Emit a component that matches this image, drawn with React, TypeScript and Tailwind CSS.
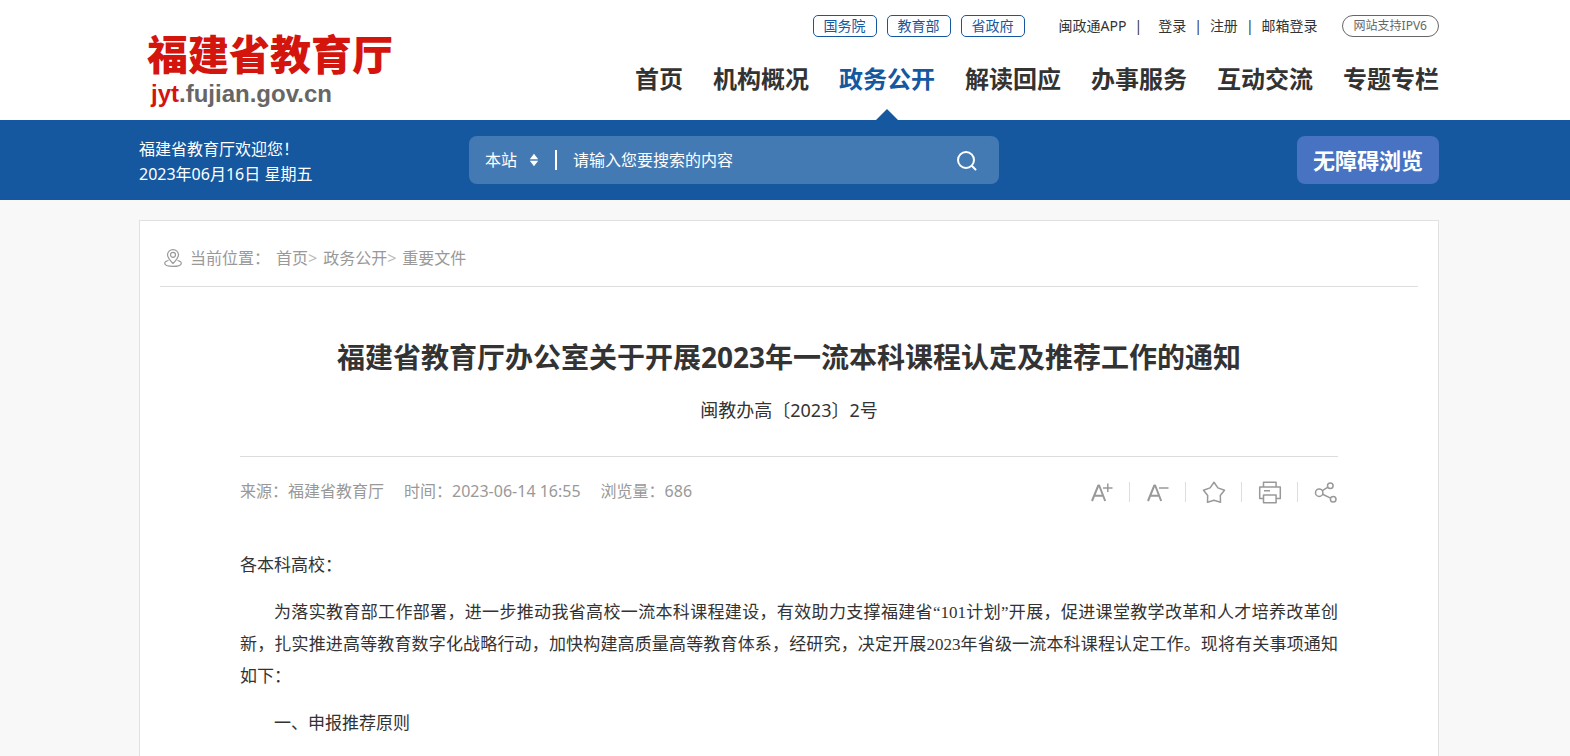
import type { ReactNode } from 'react';

const departments = ['国务院', '教育部', '省政府'];

const navItems = [
    { label: '首页' },
    { label: '机构概况' },
    { label: '政务公开', active: true },
    { label: '解读回应' },
    { label: '办事服务' },
    { label: '互动交流' },
    { label: '专题专栏' },
];

const crumbs = ['首页', '政务公开', '重要文件'];

const paragraphs = [
    '为落实教育部工作部署，进一步推动我省高校一流本科课程建设，有效助力支撑福建省“101计划”开展，促进课堂教学改革和人才培养改革创新，扎实推进高等教育数字化战略行动，加快构建高质量高等教育体系，经研究，决定开展2023年省级一流本科课程认定工作。现将有关事项通知如下：',
    '一、申报推荐原则',
];

const tools: { label: string; icon: ReactNode }[] = [
    {
        label: '放大字体',
        icon: (
            <>
                <path strokeWidth="2" d="M2 21 8.300 5.500h.900L15.200 21M4.500 15.700h8.300" />
                <path d="M13 8h9.500M17.800 3.500v8.500" />
            </>
        ),
    },
    {
        label: '缩小字体',
        icon: (
            <>
                <path strokeWidth="2" d="M2 21 8.300 5.500h.900L15.200 21M4.500 15.700h8.300" />
                <path d="M13 8h9.500" />
            </>
        ),
    },
    {
        label: '收藏',
        icon: <path d="m12 2.300 3.900 5.600 6.600 2.300-4.200 5.300.200 6.700-6.500-1.900-6.500 1.900.200-6.700-4.200-5.300 6.600-2.300Z" />,
    },
    {
        label: '打印',
        icon: <path d="M5.500 7V2.300h12.600V7M5.500 18.500H1.700V7h20.600v11.500h-4.200M5.500 15h12.600v7.700H5.500ZM6 10.700h6" />,
    },
    {
        label: '分享',
        icon: (
            <>
                <circle cx="5.200" cy="12.700" r="3.700" />
                <circle cx="16.300" cy="5.700" r="2.800" />
                <circle cx="19.200" cy="19.300" r="2.800" />
                <path d="m8.400 10.700 5.500-3.500M8.600 14.300l8 3.800" />
            </>
        ),
    },
];

function Header() {
    return (
        <header className="bg-white pl-2">
            <div className="mx-auto flex h-[120px] max-w-[1300px] justify-between">
                <a href="#" className="block pl-2 pt-7">
                    <span className="block text-[41px] leading-[52px] font-black text-[#d3150d]">福建省教育厅</span>
                    <span className="block pl-1 font-['Liberation_Sans'] text-2xl leading-7 font-bold text-[#666666]">
                        <span className="text-[#d3150d]">jyt</span>.fujian.gov.cn
                    </span>
                </a>

                <div className="flex flex-col items-end pt-[15px]">
                    <div className="flex items-center text-sm leading-5 text-[#333333]">
                        <div className="flex gap-[10px]">
                            {departments.map((name) => (
                                <a
                                    key={name}
                                    href="#"
                                    className="flex h-[22px] w-16 items-center justify-center rounded-[5px] border border-[#1558a0] text-[#1558a0]"
                                >
                                    {name}
                                </a>
                            ))}
                        </div>
                        <a href="#" className="ml-[34px]">闽政通APP</a>
                        <span className="mx-2">|</span>
                        <a href="#" className="ml-2">登录</a>
                        <span className="mx-2">|</span>
                        <a href="#">注册</a>
                        <span className="mx-2">|</span>
                        <a href="#">邮箱登录</a>
                        <a
                            href="#"
                            className="ml-6 flex h-[22px] items-center rounded-full border border-[#666666] px-[11px] text-xs text-[#666666]"
                        >
                            网站支持IPV6
                        </a>
                    </div>

                    <nav className="mt-6 flex grow gap-[30px] text-2xl leading-9 font-bold text-[#333333]">
                        {navItems.map((item) => (
                            <a
                                key={item.label}
                                href="#"
                                className={`flex flex-col items-center justify-between ${item.active ? 'text-[#1558a0]' : ''}`}
                            >
                                {item.label}
                                {item.active && (
                                    <svg viewBox="0 0 22 11" className="h-[11px] w-[22px]" fill="currentColor" aria-hidden="true">
                                        <path d="M11 0 22 11H0Z" />
                                    </svg>
                                )}
                            </a>
                        ))}
                    </nav>
                </div>
            </div>
        </header>
    );
}

function SearchBar() {
    return (
        <section className="bg-[#1558a0] pl-2 text-white">
            <div className="mx-auto flex h-20 max-w-[1300px] items-center">
                <div className="w-[330px] pt-1 text-base leading-[25px]">
                    <p>福建省教育厅欢迎您！</p>
                    <p>2023年06月16日 星期五</p>
                </div>

                <form className="flex h-12 w-[530px] items-center rounded-lg bg-[#447ab4] pl-4">
                    <select aria-label="搜索范围" className="w-9 appearance-none bg-transparent text-base outline-none">
                        <option>本站</option>
                    </select>
                    <svg viewBox="0 0 10 14" className="ml-2 h-[14px] w-[10px]" fill="currentColor" aria-hidden="true">
                        <path d="M5 .800 9.200 6.200H.800ZM5 13.200.800 7.800h8.400Z" />
                    </svg>
                    <span className="ml-4 h-5 w-[2px] bg-white" />
                    <input
                        type="text"
                        aria-label="搜索内容"
                        placeholder="请输入您要搜索的内容"
                        className="ml-4 grow bg-transparent text-base outline-none placeholder:text-white"
                    />
                    <button type="submit" aria-label="搜索" className="px-5">
                        <svg viewBox="0 0 24 24" className="size-6" fill="none" stroke="currentColor" strokeWidth="2" strokeLinecap="round">
                            <circle cx="11" cy="12" r="8" />
                            <path d="m17 18 3.500 3.500" />
                        </svg>
                    </button>
                </form>

                <button type="button" className="ml-auto h-12 w-[142px] rounded-lg bg-[#4773c2] text-[22px] font-bold">
                    无障碍浏览
                </button>
            </div>
        </section>
    );
}

function Breadcrumb() {
    return (
        <div className="flex h-[66px] items-center border-b border-[#dddddd] pt-2 text-base text-[#999999]">
            <svg viewBox="0 0 18 18" className="ml-1 size-[18px]" fill="none" stroke="currentColor" strokeWidth="1.200" aria-hidden="true">
                <path d="M9 14.500C6 11.500 3.500 8.500 3.500 5.800a5.500 5.200 0 0 1 11 0C14.500 8.500 12 11.500 9 14.500Z" />
                <circle cx="9" cy="5.800" r="2.500" />
                <path d="M4.500 11.500C2 12 .700 13 .700 14.300.700 16.200 4 17.400 9 17.400s8.300-1.200 8.300-3.100c0-1.300-1.300-2.300-3.800-2.800" />
            </svg>
            <span className="mr-[6px] ml-2">当前位置：</span>
            <nav className="flex items-center gap-[6px]">
                {crumbs.map((crumb, index) => (
                    <span key={crumb} className="flex items-center">
                        <a href="#">{crumb}</a>
                        {index < crumbs.length - 1 && <span className="text-[#bbbbbb]">&gt;</span>}
                    </span>
                ))}
            </nav>
        </div>
    );
}

function Article() {
    return (
        <article className="px-20 pt-[50px]">
            <h1 className="text-center text-[28px] leading-10 font-bold text-[#333333]">
                福建省教育厅办公室关于开展2023年一流本科课程认定及推荐工作的通知
            </h1>
            <p className="mt-[17px] text-center text-lg leading-8 text-[#333333]">闽教办高〔2023〕2号</p>

            <div className="mt-[30px] flex h-[68px] items-center justify-between border-t border-[#dddddd] text-base text-[#999999]">
                <div className="flex gap-5">
                    <span>来源：福建省教育厅</span>
                    <span>时间：2023-06-14 16:55</span>
                    <span>浏览量：686</span>
                </div>
                <div className="flex items-center divide-x divide-[#dddddd] pt-[2px]">
                    {tools.map((tool) => (
                        <button
                            key={tool.label}
                            type="button"
                            aria-label={tool.label}
                            className="flex h-5 items-center pr-[15px] pl-4 first:pl-0 last:pr-0"
                        >
                            <svg viewBox="0 0 24 24" className="size-6" fill="none" stroke="currentColor" strokeWidth="1.500" strokeLinejoin="round">
                                {tool.icon}
                            </svg>
                        </button>
                    ))}
                </div>
            </div>

            <div className="mt-[26px] space-y-[15px] font-['Liberation_Serif','Noto_Sans_CJK_SC',serif] text-[17px] leading-8 text-[#333333]">
                <p>各本科高校：</p>
                {paragraphs.map((text) => (
                    <p key={text} className="text-justify indent-[2em]">
                        {text}
                    </p>
                ))}
            </div>
        </article>
    );
}

export default function App() {
    return (
        <div lang="zh-CN" className="h-screen overflow-hidden bg-[#f8f8f8] font-['Noto_Sans','Noto_Sans_CJK_SC',sans-serif]">
            <Header />
            <SearchBar />
            <main className="pl-2 pt-5">
                <div className="mx-auto min-h-screen max-w-[1300px] border border-[#e1e1e1] bg-white px-5">
                    <Breadcrumb />
                    <Article />
                </div>
            </main>
        </div>
    );
}
